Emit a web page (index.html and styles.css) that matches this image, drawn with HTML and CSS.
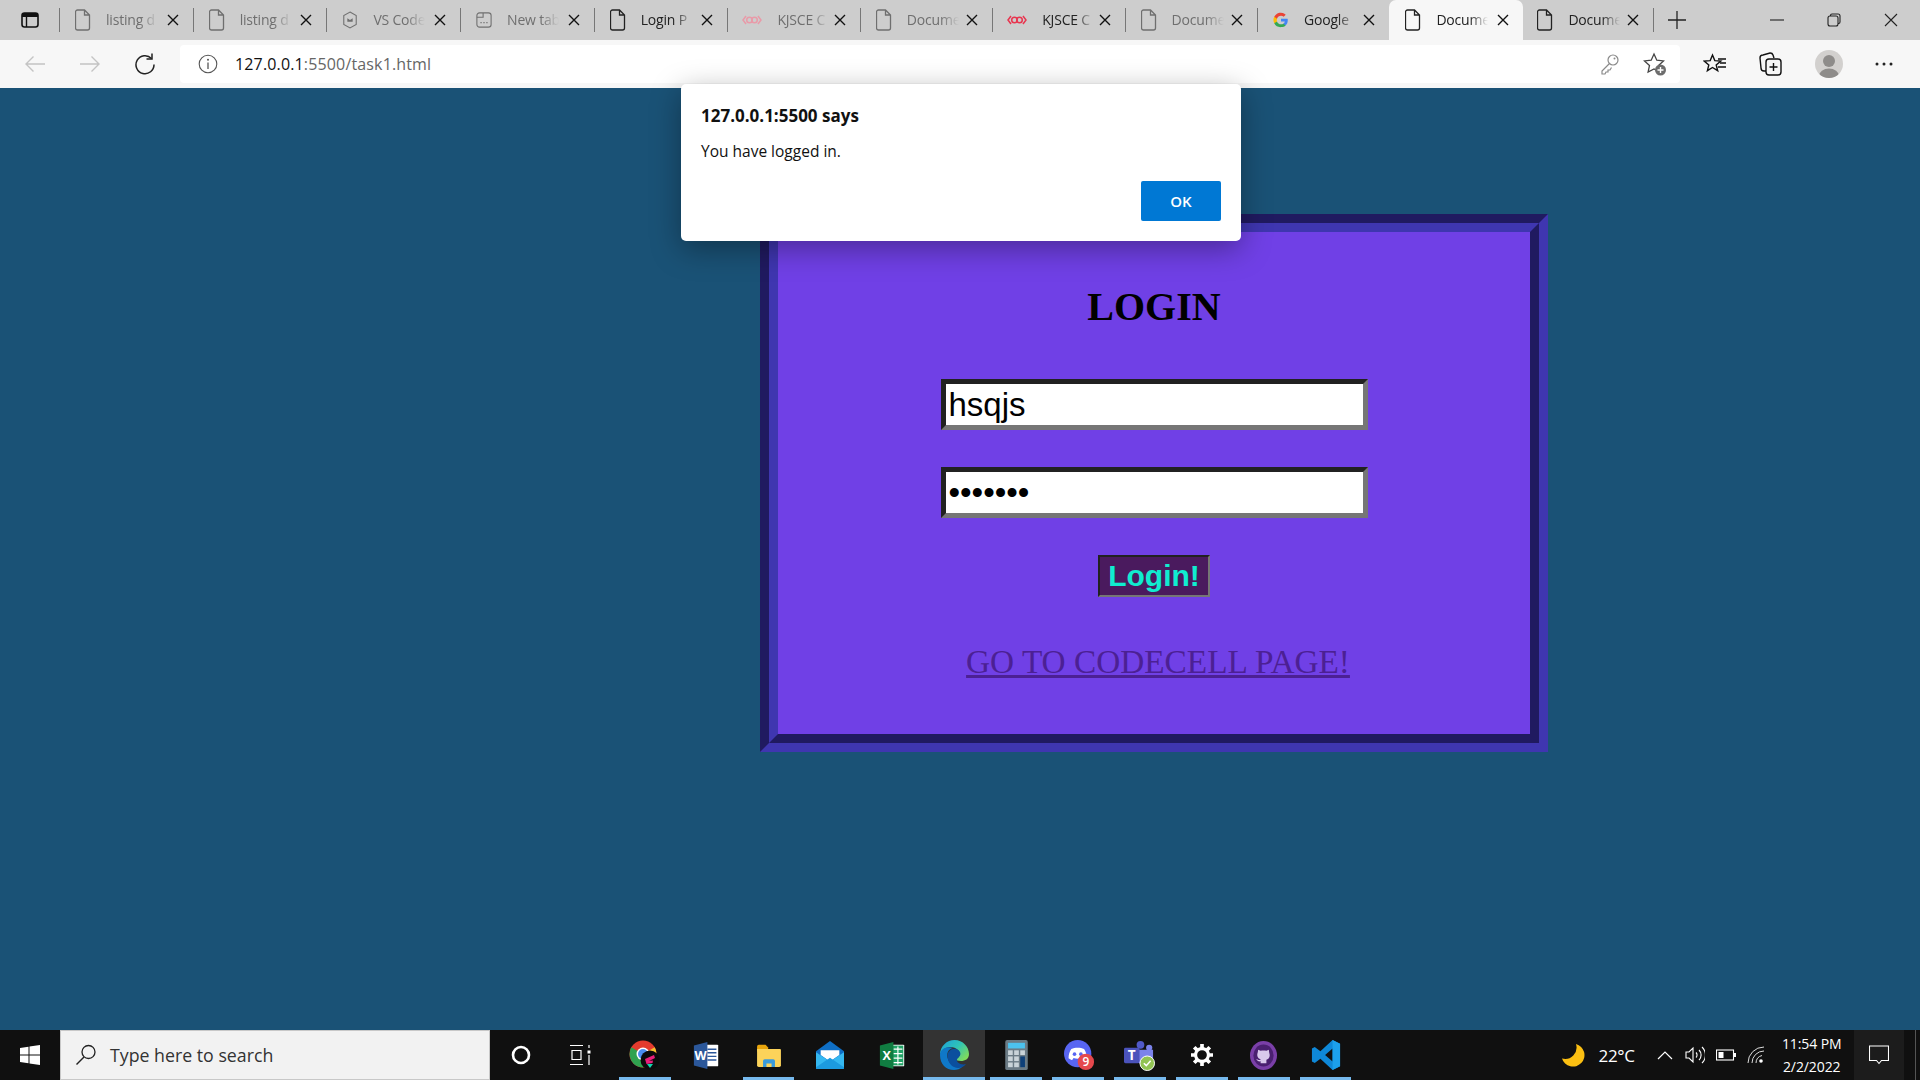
FILE: index.html
```html
<!DOCTYPE html>
<html lang="en">

<head>
    <meta charset="UTF-8">
    <title>Document</title>
    <link rel="stylesheet" href="styles.css">
</head>

<body>
    <svg class="defs" width="0" height="0">
        <symbol id="doc" viewBox="0 0 16 22">
            <path d="M2.5 1h7l5 5v13a2 2 0 0 1-2 2h-10a2 2 0 0 1-2-2V3a2 2 0 0 1 2-2z M9.5 1v5h5" fill="none" stroke="currentColor" stroke-width="1.3"/>
        </symbol>
        <symbol id="close" viewBox="0 0 12 12">
            <path d="M1 1l10 10M11 1L1 11" fill="none" stroke="currentColor" stroke-width="1.4"/>
        </symbol>
        <symbol id="kj" viewBox="0 0 20 12">
            <path d="M4 2L1 6l3 4M16 2l3 4-3 4" fill="none" stroke="currentColor" stroke-width="1.5"/>
            <circle cx="7.5" cy="6" r="2.8" fill="none" stroke="currentColor" stroke-width="1.5"/>
            <circle cx="12.5" cy="6" r="2.8" fill="none" stroke="currentColor" stroke-width="1.5"/>
        </symbol>
    </svg>

    <div class="tabstrip">
        <div class="panel-btn">
            <svg width="18" height="18" viewBox="0 0 18 18"><rect x="1" y="2" width="16" height="14" rx="2.5" fill="none" stroke="#111" stroke-width="1.6"/><path d="M1 3.5a1.5 1.5 0 0 1 1.5-1.5h13A1.5 1.5 0 0 1 17 3.5V6H1z" fill="#111"/><path d="M5.5 6v10" stroke="#111" stroke-width="1.4"/></svg>
        </div>
        <div class="tab dim"><svg class="tab-icon" width="16" height="22"><use href="#doc"/></svg><span class="tab-title">listing d</span><svg class="tab-x" width="12" height="12"><use href="#close"/></svg></div>
        <div class="tab dim"><svg class="tab-icon" width="16" height="22"><use href="#doc"/></svg><span class="tab-title">listing d</span><svg class="tab-x" width="12" height="12"><use href="#close"/></svg></div>
        <div class="tab dim">
            <svg class="tab-icon" width="18" height="22" viewBox="0 0 18 22"><path d="M9 2l7 4v10l-7 4-7-4V6z" fill="none" stroke="currentColor" stroke-width="1.2"/><path d="M6 9l3 2 3-2v4H6z" fill="currentColor"/></svg>
            <span class="tab-title">VS Code</span><svg class="tab-x" width="12" height="12"><use href="#close"/></svg>
        </div>
        <div class="tab dim">
            <svg class="tab-icon" width="18" height="22" viewBox="0 0 18 22"><rect x="1" y="3" width="16" height="16" rx="3" fill="none" stroke="currentColor" stroke-width="1.2"/><path d="M1 8h7V3" fill="none" stroke="currentColor" stroke-width="1.2"/><path d="M5 14h1.4M8.3 14h1.4M11.6 14H13" stroke="currentColor" stroke-width="1.4"/></svg>
            <span class="tab-title">New tab</span><svg class="tab-x" width="12" height="12"><use href="#close"/></svg>
        </div>
        <div class="tab"><svg class="tab-icon" width="16" height="22"><use href="#doc"/></svg><span class="tab-title">Login P</span><svg class="tab-x" width="12" height="12"><use href="#close"/></svg></div>
        <div class="tab dim"><svg class="tab-icon kj" width="20" height="12"><use href="#kj"/></svg><span class="tab-title">KJSCE C</span><svg class="tab-x" width="12" height="12"><use href="#close"/></svg></div>
        <div class="tab dim"><svg class="tab-icon" width="16" height="22"><use href="#doc"/></svg><span class="tab-title">Docume</span><svg class="tab-x" width="12" height="12"><use href="#close"/></svg></div>
        <div class="tab"><svg class="tab-icon kj" width="20" height="12"><use href="#kj"/></svg><span class="tab-title">KJSCE C</span><svg class="tab-x" width="12" height="12"><use href="#close"/></svg></div>
        <div class="tab dim"><svg class="tab-icon" width="16" height="22"><use href="#doc"/></svg><span class="tab-title">Docume</span><svg class="tab-x" width="12" height="12"><use href="#close"/></svg></div>
        <div class="tab">
            <svg class="tab-icon" width="18" height="18" viewBox="0 0 18 18">
                <path d="M16.6 9.2c0-.6 0-1.100-.2-1.600H9v3h4.300a3.700 3.700 0 0 1-1.600 2.400v2h2.600c1.500-1.400 2.300-3.400 2.300-5.800z" fill="#4285f4"/>
                <path d="M9 17c2.200 0 4-.7 5.300-1.900l-2.600-2c-.7.500-1.600.8-2.700.8-2.100 0-3.800-1.400-4.500-3.300H1.400v2.100A8 8 0 0 0 9 17z" fill="#34a853"/>
                <path d="M4.500 10.600a4.800 4.800 0 0 1 0-3.100V5.400H1.400a8 8 0 0 0 0 7.300z" fill="#fbbc05"/>
                <path d="M9 4.200c1.200 0 2.200.4 3 1.200l2.300-2.300A8 8 0 0 0 1.400 5.400l3.100 2.100C5.200 5.600 6.900 4.200 9 4.200z" fill="#ea4335"/>
            </svg>
            <span class="tab-title">Google</span><svg class="tab-x" width="12" height="12"><use href="#close"/></svg>
        </div>
        <div class="tab active"><svg class="tab-icon" width="16" height="22"><use href="#doc"/></svg><span class="tab-title">Docume</span><svg class="tab-x" width="12" height="12"><use href="#close"/></svg></div>
        <div class="tab last"><svg class="tab-icon" width="16" height="22"><use href="#doc"/></svg><span class="tab-title">Docume</span><svg class="tab-x" width="12" height="12"><use href="#close"/></svg></div>
        <div class="new-tab"><svg width="18" height="18" viewBox="0 0 18 18"><path d="M9 0v18M0 9h18" stroke="#222" stroke-width="1.3"/></svg></div>
        <div class="win-btns">
            <svg width="14" height="14" viewBox="0 0 14 14"><path d="M0 7h14" stroke="#222" stroke-width="1.1"/></svg>
            <svg width="14" height="14" viewBox="0 0 14 14"><rect x="1" y="3" width="10" height="10" rx="2" fill="none" stroke="#222" stroke-width="1.1"/><path d="M3.500 3V2.500A1.500 1.500 0 0 1 5 1h6a2 2 0 0 1 2 2v6a1.500 1.500 0 0 1-1.500 1.500H11" fill="none" stroke="#222" stroke-width="1.1"/></svg>
            <svg width="14" height="14" viewBox="0 0 14 14"><path d="M1 1l12 12M13 1L1 13" stroke="#222" stroke-width="1.1"/></svg>
        </div>
    </div>

    <div class="toolbar">
        <div class="nav-btns">
            <svg width="22" height="18" viewBox="0 0 22 18"><path d="M21 9H2M9.500 1.500L2 9l7.500 7.500" fill="none" stroke="#c4c4c4" stroke-width="1.4"/></svg>
            <svg width="22" height="18" viewBox="0 0 22 18"><path d="M1 9h19M12.500 1.500L20 9l-7.500 7.500" fill="none" stroke="#c4c4c4" stroke-width="1.4"/></svg>
            <svg width="22" height="22" viewBox="0 0 22 22"><path d="M17.500 5.500a9 9 0 1 0 2.500 6" fill="none" stroke="#222" stroke-width="1.5"/><path d="M18 0.500v5.500h-5.500" fill="none" stroke="#222" stroke-width="1.5"/></svg>
        </div>
        <div class="address">
            <svg class="info" width="20" height="20" viewBox="0 0 20 20"><circle cx="10" cy="10" r="8.800" fill="none" stroke="#555" stroke-width="1.100"/><path d="M10 8.500V15" stroke="#555" stroke-width="1.300"/><circle cx="10" cy="5.800" r="1" fill="#555"/></svg>
            <span class="url"><span class="host">127.0.0.1</span>:5500/task1.html</span>
            <svg class="key" width="20" height="22" viewBox="0 0 20 22"><circle cx="13" cy="7" r="5" fill="none" stroke="#8a8a8a" stroke-width="1.200"/><path d="M9.500 10.500L2 18v3h3l1-2h2v-2h2l1.500-2.500" fill="none" stroke="#8a8a8a" stroke-width="1.200"/><circle cx="14.500" cy="5.500" r="1" fill="#8a8a8a"/></svg>
            <svg class="fav-add" width="24" height="24" viewBox="0 0 24 24"><path d="M11 2l2.800 6.200 6.700.7-5 4.600 1.400 6.600L11 17l-5.900 3.100 1.400-6.600-5-4.600 6.700-.7z" fill="none" stroke="#444" stroke-width="1.300"/><circle cx="17.500" cy="18" r="5.500" fill="#6d6d6d"/><path d="M17.500 15v6M14.500 18h6" stroke="#fff" stroke-width="1.400"/></svg>
        </div>
        <div class="tool-btns">
            <svg width="24" height="24" viewBox="0 0 24 24"><path d="M9.500 3l2.300 5.600 6 .4-4.600 3.900 1.500 5.800-5.200-3.200-5.100 3.200 1.400-5.800L1.200 9l6-.4z" fill="none" stroke="#111" stroke-width="1.400"/><path d="M15 7h8M17 11h6M15 15h8" stroke="#111" stroke-width="1.400"/></svg>
            <svg width="24" height="26" viewBox="0 0 24 26"><path d="M7 20H5a3 3 0 0 1-3-3L1 7a3 3 0 0 1 3-3l7-2a3 3 0 0 1 3 2l1 3" fill="none" stroke="#111" stroke-width="1.400"/><rect x="7" y="8" width="15" height="16" rx="3" fill="#f7f7f7" stroke="#111" stroke-width="1.400"/><path d="M14.500 12v8M10.500 16h8" stroke="#111" stroke-width="1.400"/></svg>
            <svg class="avatar" width="28" height="28" viewBox="0 0 28 28"><defs><clipPath id="av"><circle cx="14" cy="14" r="14"/></clipPath></defs><circle cx="14" cy="14" r="14" fill="#d2d0ce"/><g clip-path="url(#av)" fill="#8e8c8a"><circle cx="14" cy="11" r="6"/><ellipse cx="14" cy="26" rx="10" ry="7.500"/></g></svg>
            <svg width="18" height="4" viewBox="0 0 18 4"><circle cx="2" cy="2" r="1.500" fill="#222"/><circle cx="9" cy="2" r="1.500" fill="#222"/><circle cx="16" cy="2" r="1.500" fill="#222"/></svg>
        </div>
    </div>

    <main class="page">
        <div class="login-box">
            <form class="login-inner">
                <h1>LOGIN</h1>
                <input class="field" type="text" value="hsqjs">
                <input class="field" type="password" value="1234567">
                <button class="login-btn" type="button">Login!</button>
                <a class="code-link" href="#">GO TO CODECELL PAGE!</a>
            </form>
        </div>
    </main>

    <div class="dialog">
        <div class="dialog-title">127.0.0.1:5500 says</div>
        <div class="dialog-msg">You have logged in.</div>
        <div class="dialog-foot"><button class="ok-btn" type="button">OK</button></div>
    </div>

    <div class="taskbar">
        <div class="start">
            <svg width="20" height="20" viewBox="0 0 20 20"><path d="M0 3l8.500-1.200v7.700H0zM9.500 1.600L20 0v9.500H9.500zM0 10.500h8.500v7.700L0 17zM9.500 10.500H20V20L9.500 18.400z" fill="#fff"/></svg>
        </div>
        <div class="search">
            <svg width="22" height="22" viewBox="0 0 22 22"><circle cx="13.500" cy="8" r="6.500" fill="none" stroke="#222" stroke-width="1.300"/><path d="M9 13L1.500 20.500" stroke="#222" stroke-width="1.500"/></svg>
            <span>Type here to search</span>
        </div>
        <div class="slot"><svg width="20" height="20" viewBox="0 0 20 20"><circle cx="10" cy="10" r="8" fill="none" stroke="#fff" stroke-width="2.600"/></svg></div>
        <div class="slot"><svg class="taskview" width="22" height="22" viewBox="0 0 22 22"><path d="M1 1.500h13M3 6.500h9v9H3zM1 20.500h13M20 1v3M20 11v10" fill="none" stroke="#fff" stroke-width="1.200"/><rect x="18.500" y="6.500" width="3" height="3" fill="#fff"/></svg></div>
        <div class="slot on">
            <svg width="32" height="30" viewBox="0 0 32 30">
                <circle cx="14" cy="14" r="13.500" fill="#e33b2e"/>
                <path d="M14 14L25.700 7.300A13.500 13.500 0 0 1 21 25.500z" fill="#f6c02c"/>
                <path d="M14 14L2.300 7.300A13.500 13.500 0 0 0 14 27.500l5-6z" fill="#2fa24f"/>
                <circle cx="14" cy="14" r="6.500" fill="#fff"/><circle cx="14" cy="14" r="5" fill="#4a8df0"/>
                <circle cx="21" cy="20" r="9.500" fill="#0b0b0b"/>
                <path d="M16 19l9-4 1 3-6 3 4-.5-.5 2.500-6 1z" fill="#e91e7b"/>
                <path d="M18 24h6l-3 4z" fill="#12d6b0"/>
            </svg>
        </div>
        <div class="slot">
            <svg width="27" height="27" viewBox="0 0 28 30"><path d="M9 3h17a1 1 0 0 1 1 1v22a1 1 0 0 1-1 1H9z" fill="#fff"/><path d="M15 8h10M15 12h10M15 16h10M15 20h10" stroke="#2b579a" stroke-width="1.600"/><path d="M0 4l15-4v30L0 26z" fill="#2b579a"/><text class="app-letter" x="7.500" y="19.500" text-anchor="middle">W</text></svg>
        </div>
        <div class="slot on">
            <svg width="28" height="23" viewBox="0 0 30 27"><path d="M1 3a2 2 0 0 1 2-2h8l3 3v5H1z" fill="#e8a50c"/><path d="M1 6h27a1 1 0 0 1 1 1v18a2 2 0 0 1-2 2H3a2 2 0 0 1-2-2z" fill="#fcd35a"/><path d="M8 27v-7a2 2 0 0 1 2-2h10a2 2 0 0 1 2 2v7h-4v-4h-6v4z" fill="#3a9bdc"/></svg>
        </div>
        <div class="slot">
            <svg width="30" height="28" viewBox="0 0 30 30"><path d="M15 0L30 11v17a2 2 0 0 1-2 2H2a2 2 0 0 1-2-2V11z" fill="#0f6fc6"/><path d="M5 10h20v5l-10 7-10-7z" fill="#fff"/><path d="M0 12l15 10 15-10v16a2 2 0 0 1-2 2H2a2 2 0 0 1-2-2z" fill="#35b8f1"/><path d="M0 28L15 18l15 10v1a1 1 0 0 1-1 1H1a1 1 0 0 1-1-1z" fill="#1c9be0"/></svg>
        </div>
        <div class="slot">
            <svg width="27" height="27" viewBox="0 0 28 30"><path d="M9 3h17a1 1 0 0 1 1 1v22a1 1 0 0 1-1 1H9z" fill="#fff"/><path d="M10 4h16v22H10z" fill="#21a366"/><path d="M15 8h10M15 13h10M15 18h10M15 23h10M20 5v20" stroke="#fff" stroke-width="1.300"/><path d="M0 4l15-4v30L0 26z" fill="#107c41"/><text class="app-letter" x="7.500" y="19.500" text-anchor="middle">X</text></svg>
        </div>
        <div class="slot on active">
            <svg width="30" height="30" viewBox="0 0 30 30">
                <defs><linearGradient id="eg" x1="0" y1="0" x2="1" y2=".7"><stop offset="0" stop-color="#1b9ede"/><stop offset=".55" stop-color="#2fc4b6"/><stop offset="1" stop-color="#7fdc5c"/></linearGradient></defs>
                <path d="M1 15C1 6 8 0 15.500 0 24 0 30 7 30 14c0 5-4 7-8 7-3 0-5-1-5-2 4-2 5-6 2-9-5-5-15-4-18 5z" fill="url(#eg)"/>
                <path d="M1 15C1 8 9 6 14 8c-5 1-7 6-5 11 2 6 8 9 15 7-3 3-6 4-9 4C7 30 1 24 1 15z" fill="#0f78c8"/>
                <path d="M8.500 17C8 11 13 8 17 9c4 1 6 5 3 8-2 2-3 3-1 5.500 2 2 6 2.500 8 1.500-3 4-8 5-12 3-4-2-6-6-6.500-10z" fill="#0b4f9e"/>
            </svg>
        </div>
        <div class="slot on">
            <svg width="23" height="30" viewBox="0 0 24 32"><rect width="24" height="32" rx="2" fill="#6b7b85"/><rect x="3" y="3" width="18" height="6" fill="#4cc2ee"/><g fill="#c9d3d8"><rect x="3" y="11" width="5" height="5"/><rect x="9.500" y="11" width="5" height="5"/><rect x="16" y="11" width="5" height="5"/><rect x="3" y="17.500" width="5" height="5"/><rect x="9.500" y="17.500" width="5" height="5"/><rect x="3" y="24" width="5" height="5"/><rect x="9.500" y="24" width="5" height="5"/></g><rect x="16" y="17.500" width="5" height="11.500" fill="#0d3f78"/></svg>
        </div>
        <div class="slot on">
            <svg class="discord" width="31" height="31" viewBox="0 0 34 34"><circle cx="15" cy="15" r="15" fill="#5865f2"/><path d="M8 10c4-2 10-2 14 0 2 3 3 6 3 10-2 1-3 2-4 2l-1.500-2.200c-3 1-6 1-9 0L9 22c-1 0-2-1-4-2 0-4 1-7 3-10z" fill="#fff"/><circle cx="11.500" cy="15.500" r="2" fill="#5865f2"/><circle cx="18.500" cy="15.500" r="2" fill="#5865f2"/><circle cx="24" cy="24" r="9" fill="#e5484d"/><text class="badge-num" x="24" y="28.500" text-anchor="middle">9</text></svg>
        </div>
        <div class="slot on">
            <svg width="31" height="31" viewBox="0 0 32 32"><circle cx="17" cy="5" r="4" fill="#5059c9"/><circle cx="26" cy="8" r="3.200" fill="#7b83eb"/><path d="M13 10h17v9a6 6 0 0 1-6 6h-5a6 6 0 0 1-6-6z" fill="#7b83eb"/><rect x="0" y="8" width="16" height="16" rx="1.500" fill="#4b53bc"/><text class="app-letter" x="8" y="20.500" text-anchor="middle">T</text><circle cx="24" cy="24" r="7.500" fill="#92c353" stroke="#fff" stroke-width="1"/><path d="M20.500 24l2.500 2.500 4.500-5" fill="none" stroke="#fff" stroke-width="1.600"/></svg>
        </div>
        <div class="slot on">
            <svg width="22" height="22" viewBox="0 0 24 24"><circle cx="12" cy="12" r="7" fill="none" stroke="#fff" stroke-width="3.400"/><path d="M12 0v5M12 19v5M0 12h5M19 12h5M3.500 3.500L7 7M17 17l3.500 3.500M20.500 3.500L17 7M7 17l-3.500 3.500" stroke="#fff" stroke-width="4"/></svg>
        </div>
        <div class="slot on">
            <svg width="27" height="29" viewBox="0 0 28 30"><ellipse cx="14" cy="15" rx="14" ry="15" fill="#7a3fa8"/><ellipse cx="14" cy="15" rx="10.500" ry="11.500" fill="#4a2070"/><path d="M8.500 9l2.500 1.200c2-.5 4-.5 6 0L19.500 9l.5 3.500c1 2.500.5 6-3 7v3.500h-6v-2c-2.500 .5-3.500-1-4.500-2.500 1.500 .5 2.500 1.500 4.500 1v-.5c-3.500-1-4-4.500-3-7z" fill="#d9c9ec"/></svg>
        </div>
        <div class="slot on">
            <svg width="30" height="30" viewBox="0 0 30 32"><path d="M22 0l8 4v24l-8 4-13-12-6 4.500L0 23v-14l3-1.500L9 12zM22 9l-8 7 8 7z" fill="#0e88d8"/><path d="M22 0l8 4v24l-8 4z" fill="#1ca0ec"/></svg>
        </div>
        <div class="tray">
            <svg class="moon" width="24" height="24" viewBox="0 0 24 24"><path d="M15 1a11.500 11.500 0 0 1-14 14.500A11.500 11.500 0 1 0 15 1z" fill="#fbbf12"/></svg>
            <span class="temp">22°C</span>
            <svg class="chev" width="16" height="10" viewBox="0 0 16 10"><path d="M1 9l7-7 7 7" fill="none" stroke="#fff" stroke-width="1.200"/></svg>
            <svg class="vol" width="20" height="20" viewBox="0 0 20 20"><path d="M1 7h3l4-4v14l-4-4H1z" fill="none" stroke="#fff" stroke-width="1.100"/><path d="M11 7.500a3.500 3.500 0 0 1 0 5M14 5a7 7 0 0 1 0 10M17 2a11 11 0 0 1 0 16" fill="none" stroke="#fff" stroke-width="1.100"/></svg>
            <svg class="batt" width="20" height="12" viewBox="0 0 20 12"><rect x=".5" y="1" width="17" height="10" fill="none" stroke="#fff" stroke-width="1.100"/><rect x="2.500" y="3" width="5" height="6" fill="#fff"/><rect x="18" y="4" width="2" height="4" fill="#fff"/></svg>
            <svg class="wifi" width="18" height="18" viewBox="0 0 18 18"><path d="M1 17A16 16 0 0 1 17 1M5 17A12 12 0 0 1 17 5M9 17a8 8 0 0 1 6-7.500" fill="none" stroke="#ddd" stroke-width="1"/><circle cx="14" cy="15" r="1.800" fill="#fff"/></svg>
            <div class="clock"><span>11:54 PM</span><span>2/2/2022</span></div>
            <div class="action">
                <svg width="20" height="20" viewBox="0 0 20 20"><path d="M.5 1h19v14.500h-7l-2.500 3-2.500-3h-7z" fill="none" stroke="#fff" stroke-width="1.100"/></svg>
            </div>
            <div class="show-desktop"></div>
        </div>
    </div>
</body>

</html>
```

FILE: styles.css
```css
* {
    box-sizing: border-box;
}

html,
body {
    height: 100%;
}

body {
    margin: 0;
    display: flex;
    flex-direction: column;
    position: relative;
    overflow: hidden;
    font-family: 'Open Sans', 'Noto Sans', sans-serif;
    background-color: #1a5276;
}

.defs {
    position: absolute;
}

/* browser tabs */
.tabstrip {
    display: flex;
    align-items: center;
    height: 40px;
    background-color: #cdcdcd;
    flex-shrink: 0;
}

.panel-btn {
    width: 59px;
    height: 100%;
    display: flex;
    align-items: center;
    justify-content: center;
    flex-shrink: 0;
}

.tab {
    width: 132.4px;
    height: 24px;
    display: flex;
    align-items: center;
    padding-left: 15px;
    border-left: 1px solid #777;
    color: #222;
    position: relative;
    flex-shrink: 0;
}

.tab:nth-child(-n+6) {
    width: 133.7px;
}

.tab.dim {
    color: #6f6f6f;
}

.tab.last {
    border-right: 1px solid #777;
    width: 131px;
}

.tab.active {
    width: 134px;
    height: 40px;
    background-color: #f7f7f7;
    border-left: none;
    border-radius: 7px 7px 0 0;
    padding-left: 16px;
}

.tab.active + .tab {
    border-left: none;
    padding-left: 14px;
}

.tab-icon {
    flex-shrink: 0;
    width: 16px;
}

.tab-icon.kj {
    width: 20px;
    margin-left: -1px;
    color: #e8354f;
}

.tab.dim .tab-icon.kj {
    color: #e99aa8;
}

.tab-title {
    width: 52px;
    margin: -2px 0 0 15px;
    overflow: hidden;
    white-space: nowrap;
    font-size: 14px;
    letter-spacing: -0.2px;
    -webkit-mask-image: linear-gradient(to right, #000 65%, transparent 100%);
    mask-image: linear-gradient(to right, #000 65%, transparent 100%);
}

.tab-x {
    position: absolute;
    right: 14px;
    top: 50%;
    margin-top: -6px;
    color: #111;
}

.new-tab {
    margin-left: 14px;
    display: flex;
}

.win-btns {
    margin-left: auto;
    display: flex;
    gap: 43px;
    padding-right: 22px;
    align-items: center;
}

/* address bar */
.toolbar {
    display: flex;
    align-items: center;
    height: 48px;
    background-color: #f7f7f7;
    flex-shrink: 0;
}

.nav-btns {
    width: 180px;
    display: flex;
    align-items: center;
    gap: 33px;
    padding-left: 24px;
}

.address {
    width: 1500px;
    height: 38px;
    display: flex;
    align-items: center;
    background-color: #fff;
    border-radius: 4px;
    padding: 0 13px 0 18px;
}

.url {
    margin-left: 17px;
    font-size: 16px;
    letter-spacing: 0.15px;
    color: #666;
}

.url .host {
    color: #111;
}

.key {
    margin-left: auto;
}

.fav-add {
    margin-left: 23px;
}

.tool-btns {
    flex: 1;
    display: flex;
    align-items: center;
    gap: 32px;
    padding-left: 23px;
}

/* page content */
.page {
    flex: 1;
    background-color: #1a5276;
    padding: 126px 0 0 760px;
}

.login-box {
    width: 788px;
    height: 538px;
    border: 9px solid;
    border-color: #201a60 #3f36b0 #3f36b0 #201a60;
}

.login-inner {
    height: 100%;
    display: flex;
    flex-direction: column;
    align-items: center;
    background-color: #7040e6;
    border: 9px solid;
    border-color: #3f36b0 #201a60 #201a60 #3f36b0;
}

.login-inner h1 {
    margin: 52px 0 0;
    height: 46px;
    line-height: 46px;
    font-family: 'Liberation Serif', serif;
    font-size: 40px;
    font-weight: bold;
    color: #000;
}

.field {
    width: 427px;
    height: 51px;
    margin-top: 37px;
    padding: 1px 3px;
    border: 5px inset #767676;
    background-color: #fff;
    font-family: 'Liberation Sans', sans-serif;
    font-size: 33px;
    color: #000;
}

.login-inner h1 + .field {
    margin-top: 49px;
}

.login-btn {
    width: 112px;
    height: 42px;
    margin-top: 37px;
    padding: 0;
    border: 2px inset #767676;
    background-color: #4a1a5e;
    font-family: 'Liberation Sans', sans-serif;
    font-size: 30px;
    font-weight: bold;
    color: #10ecd0;
}

.code-link {
    margin: 46px 0 0 8px;
    font-family: 'Liberation Serif', serif;
    font-size: 33.3px;
    color: #4c2094;
    text-decoration-thickness: 3px;
}

/* alert, sits over the page */
.dialog {
    position: absolute;
    left: 681px;
    top: 84px;
    width: 560px;
    height: 157px;
    padding: 21px 20px 0;
    background-color: #fff;
    border-radius: 5px;
    box-shadow: 0 8px 30px rgba(0, 0, 0, 0.35);
    color: #111;
}

.dialog-title {
    font-size: 17px;
    font-weight: 700;
    line-height: 22px;
}

.dialog-msg {
    margin-top: 13px;
    font-size: 15.5px;
    line-height: 22px;
}

.dialog-foot {
    display: flex;
    justify-content: flex-end;
    margin-top: 19px;
}

.ok-btn {
    width: 80px;
    height: 40px;
    border: none;
    border-radius: 2px;
    background-color: #0078d4;
    color: #fff;
    font-family: inherit;
    font-size: 15px;
    font-weight: 600;
}

/* windows taskbar */
.taskbar {
    display: flex;
    height: 50px;
    flex-shrink: 0;
    background-color: #101010;
}

.start {
    width: 60px;
    display: flex;
    align-items: center;
    justify-content: center;
    flex-shrink: 0;
}

.search {
    width: 430px;
    display: flex;
    align-items: center;
    gap: 12px;
    padding-left: 14px;
    background-color: #f2f2f2;
    border: 1px solid #c8c8c8;
    font-size: 17.75px;
    color: #333;
    flex-shrink: 0;
}

.search span {
    margin-left: 1px;
}

.slot {
    width: 61.9px;
    height: 100%;
    display: flex;
    align-items: center;
    justify-content: center;
    position: relative;
    flex-shrink: 0;
}

.slot.active {
    background-color: #333;
}

.slot.on::after {
    content: '';
    position: absolute;
    left: 5px;
    right: 5px;
    bottom: 0;
    height: 3px;
    background-color: #76b9ed;
}

.slot.active::after {
    left: 0;
    right: 0;
}

.taskview {
    margin-right: 6px;
}

.discord {
    margin-left: 4px;
}

.app-letter {
    font-family: 'Open Sans', sans-serif;
    font-size: 14px;
    font-weight: 700;
    fill: #fff;
}

.badge-num {
    font-family: 'Open Sans', sans-serif;
    font-size: 13px;
    font-weight: 600;
    fill: #fff;
}

.tray {
    flex: 1;
    display: flex;
    align-items: center;
    color: #fff;
}

.moon {
    margin-left: 205px;
}

.temp {
    margin-left: 13px;
    font-size: 17px;
    letter-spacing: -0.3px;
}

.chev {
    margin-left: 22px;
}

.vol {
    margin-left: 12px;
}

.batt {
    margin-left: 11px;
}

.wifi {
    margin-left: 11px;
}

.clock {
    margin-left: 14px;
    width: 66px;
    display: flex;
    flex-direction: column;
    align-items: center;
    gap: 5px;
    font-size: 14px;
    letter-spacing: -0.1px;
    line-height: 18px;
    white-space: nowrap;
}

.action {
    margin-left: auto;
    width: 50px;
    height: 100%;
    display: flex;
    align-items: center;
    justify-content: center;
    background-color: #1c1c1c;
}

.show-desktop {
    width: 5px;
    height: 100%;
    border-left: 1px solid #555;
    margin-left: 11px;
}
```
